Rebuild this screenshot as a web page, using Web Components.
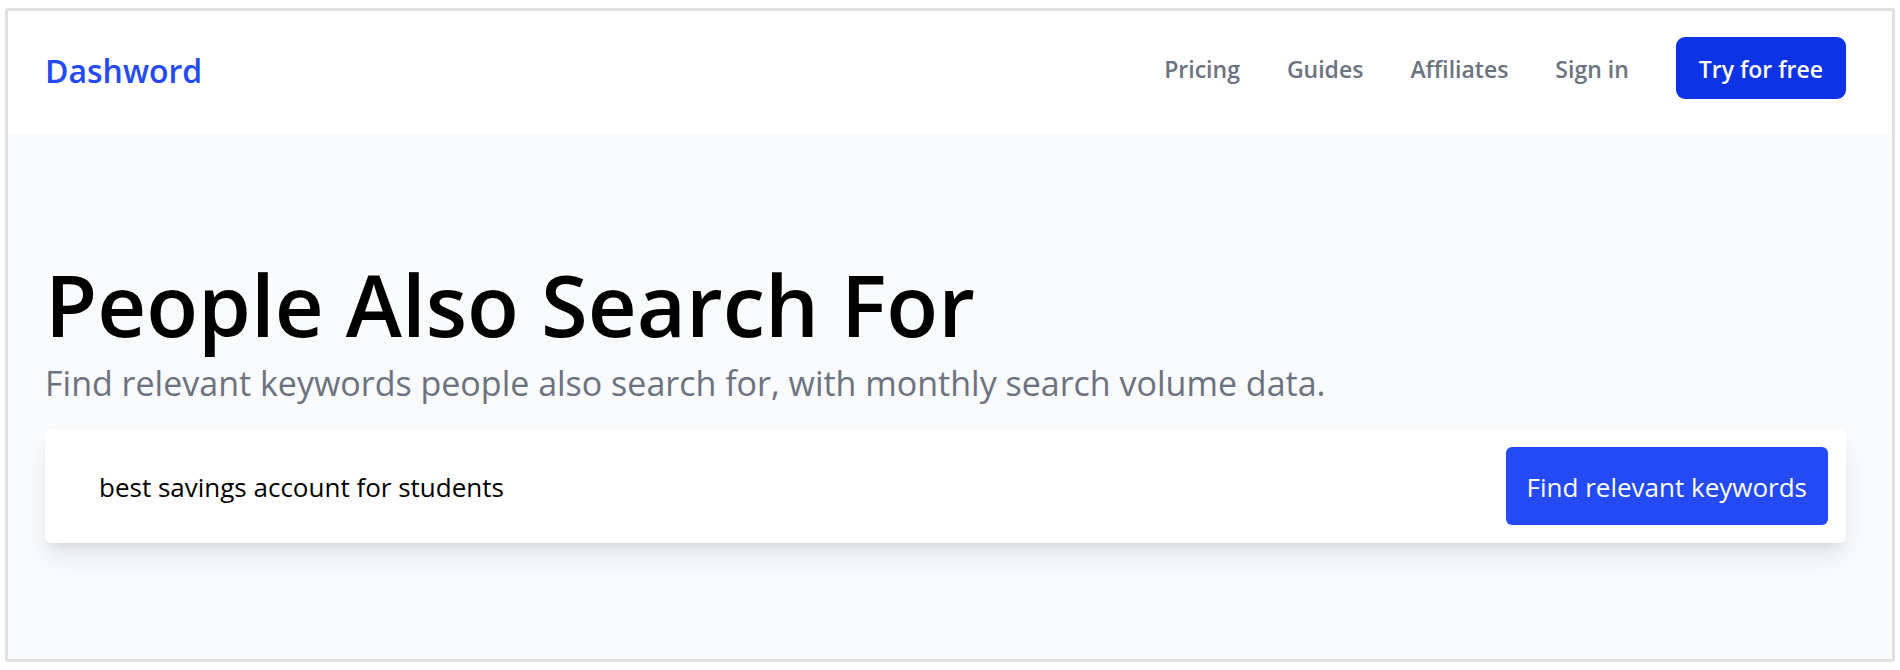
<!DOCTYPE html>
<html lang="en">
<head>
  <meta charset="utf-8">
  <meta name="viewport" content="width=device-width, initial-scale=1">
  <title>People Also Search For - Dashword</title>
  <style>
    body {
      --brand: #244af4;
      --brand-dark: #0d33e5;
      --muted: #6b7280;
      --surface: #f9fafc;
      --gutter-left: 37px;
      --gutter-right: 46px;
      margin: 8px 5px;
      background: #fff;
      color: #000;
      font-family: "Open Sans", "Noto Sans", sans-serif;
    }
  </style>
</head>
<body>
  <page-frame>
    <site-header slot="header">
      <nav-link href="#pricing">Pricing</nav-link>
      <nav-link href="#guides">Guides</nav-link>
      <nav-link href="#affiliates">Affiliates</nav-link>
      <nav-link href="#signin">Sign in</nav-link>
      <nav-link href="#signup" primary>Try for free</nav-link>
    </site-header>
    <page-hero>
      <span slot="title">People Also Search For</span>
      <span slot="subtitle">Find relevant keywords people also search for, with monthly search volume data.</span>
      <keyword-search value="best savings account for students">Find relevant keywords</keyword-search>
    </page-hero>
  </page-frame>

  <script>
    class PageFrame extends HTMLElement {
      constructor() {
        super();
        this.attachShadow({ mode: 'open' });
        this.shadowRoot.innerHTML = `
          <style>
            :host {
              display: block;
              border: 3px solid #e1e1e1;
              border-radius: 3px;
            }
            main { background: var(--surface); }
          </style>
          <slot name="header"></slot>
          <main><slot></slot></main>
        `;
      }
    }

    class SiteHeader extends HTMLElement {
      constructor() {
        super();
        this.attachShadow({ mode: 'open' });
        this.shadowRoot.innerHTML = `
          <style>
            :host { display: block; background: #fff; }
            header {
              display: flex;
              justify-content: space-between;
              align-items: flex-start;
              flex-wrap: wrap;
              padding: 26px var(--gutter-right) 30px var(--gutter-left);
            }
            .logo {
              color: var(--brand);
              font-size: 32px;
              font-weight: 600;
              line-height: 68px;
              text-decoration: none;
            }
            nav {
              display: flex;
              flex-wrap: wrap;
              gap: 0 47px;
            }
          </style>
          <header>
            <a class="logo" href="#home">Dashword</a>
            <nav aria-label="Main"><slot></slot></nav>
          </header>
        `;
      }
    }

    class NavLink extends HTMLElement {
      constructor() {
        super();
        this.attachShadow({ mode: 'open' });
      }

      connectedCallback() {
        this.shadowRoot.innerHTML = `
          <style>
            :host { display: block; }
            a {
              display: block;
              padding: 2px 0 0;
              color: var(--muted);
              font-size: 23px;
              font-weight: 600;
              line-height: 60px;
              text-decoration: none;
              white-space: nowrap;
            }
            :host([primary]) a {
              padding: 2px 23px 0;
              border-radius: 9px;
              background: var(--brand-dark);
              color: #fff;
            }
          </style>
          <a href="${this.getAttribute('href')}"><slot></slot></a>
        `;
      }
    }

    class PageHero extends HTMLElement {
      constructor() {
        super();
        this.attachShadow({ mode: 'open' });
        this.shadowRoot.innerHTML = `
          <style>
            :host {
              display: block;
              padding: 123px var(--gutter-right) 116px var(--gutter-left);
            }
            h1 {
              margin: 0 0 6px;
              font-size: 85px;
              font-weight: 600;
              line-height: 92px;
            }
            p {
              margin: 0 0 19px;
              color: var(--muted);
              font-size: 34px;
              line-height: 54px;
            }
          </style>
          <h1><slot name="title"></slot></h1>
          <p><slot name="subtitle"></slot></p>
          <slot></slot>
        `;
      }
    }

    class KeywordSearch extends HTMLElement {
      constructor() {
        super();
        this.attachShadow({ mode: 'open' });
      }

      connectedCallback() {
        this.shadowRoot.innerHTML = `
          <style>
            :host { display: block; }
            form {
              display: flex;
              margin: 0;
              padding: 18px;
              border-radius: 6px;
              background: #fff;
              box-shadow: 0 15px 22px -4px rgba(0, 0, 0, 0.1), 0 6px 9px -3px rgba(0, 0, 0, 0.05);
            }
            input {
              flex: 1;
              min-width: 0;
              padding: 2px 36px 0;
              border: 0;
              outline: 0;
              background: transparent;
              color: inherit;
              font-family: inherit;
              font-size: 26px;
            }
            button {
              padding: 2px 21px 0;
              border: 0;
              border-radius: 6px;
              background: var(--brand);
              color: #fff;
              font-family: inherit;
              font-size: 26px;
              line-height: 76px;
              cursor: pointer;
            }
          </style>
          <form>
            <input type="text" name="keyword" aria-label="Keyword">
            <button type="submit"><slot></slot></button>
          </form>
        `;
        this.shadowRoot.querySelector('input').value = this.getAttribute('value') || '';
        this.shadowRoot.querySelector('form').addEventListener('submit', (event) => event.preventDefault());
      }
    }

    customElements.define('page-frame', PageFrame);
    customElements.define('site-header', SiteHeader);
    customElements.define('nav-link', NavLink);
    customElements.define('page-hero', PageHero);
    customElements.define('keyword-search', KeywordSearch);
  </script>
</body>
</html>
